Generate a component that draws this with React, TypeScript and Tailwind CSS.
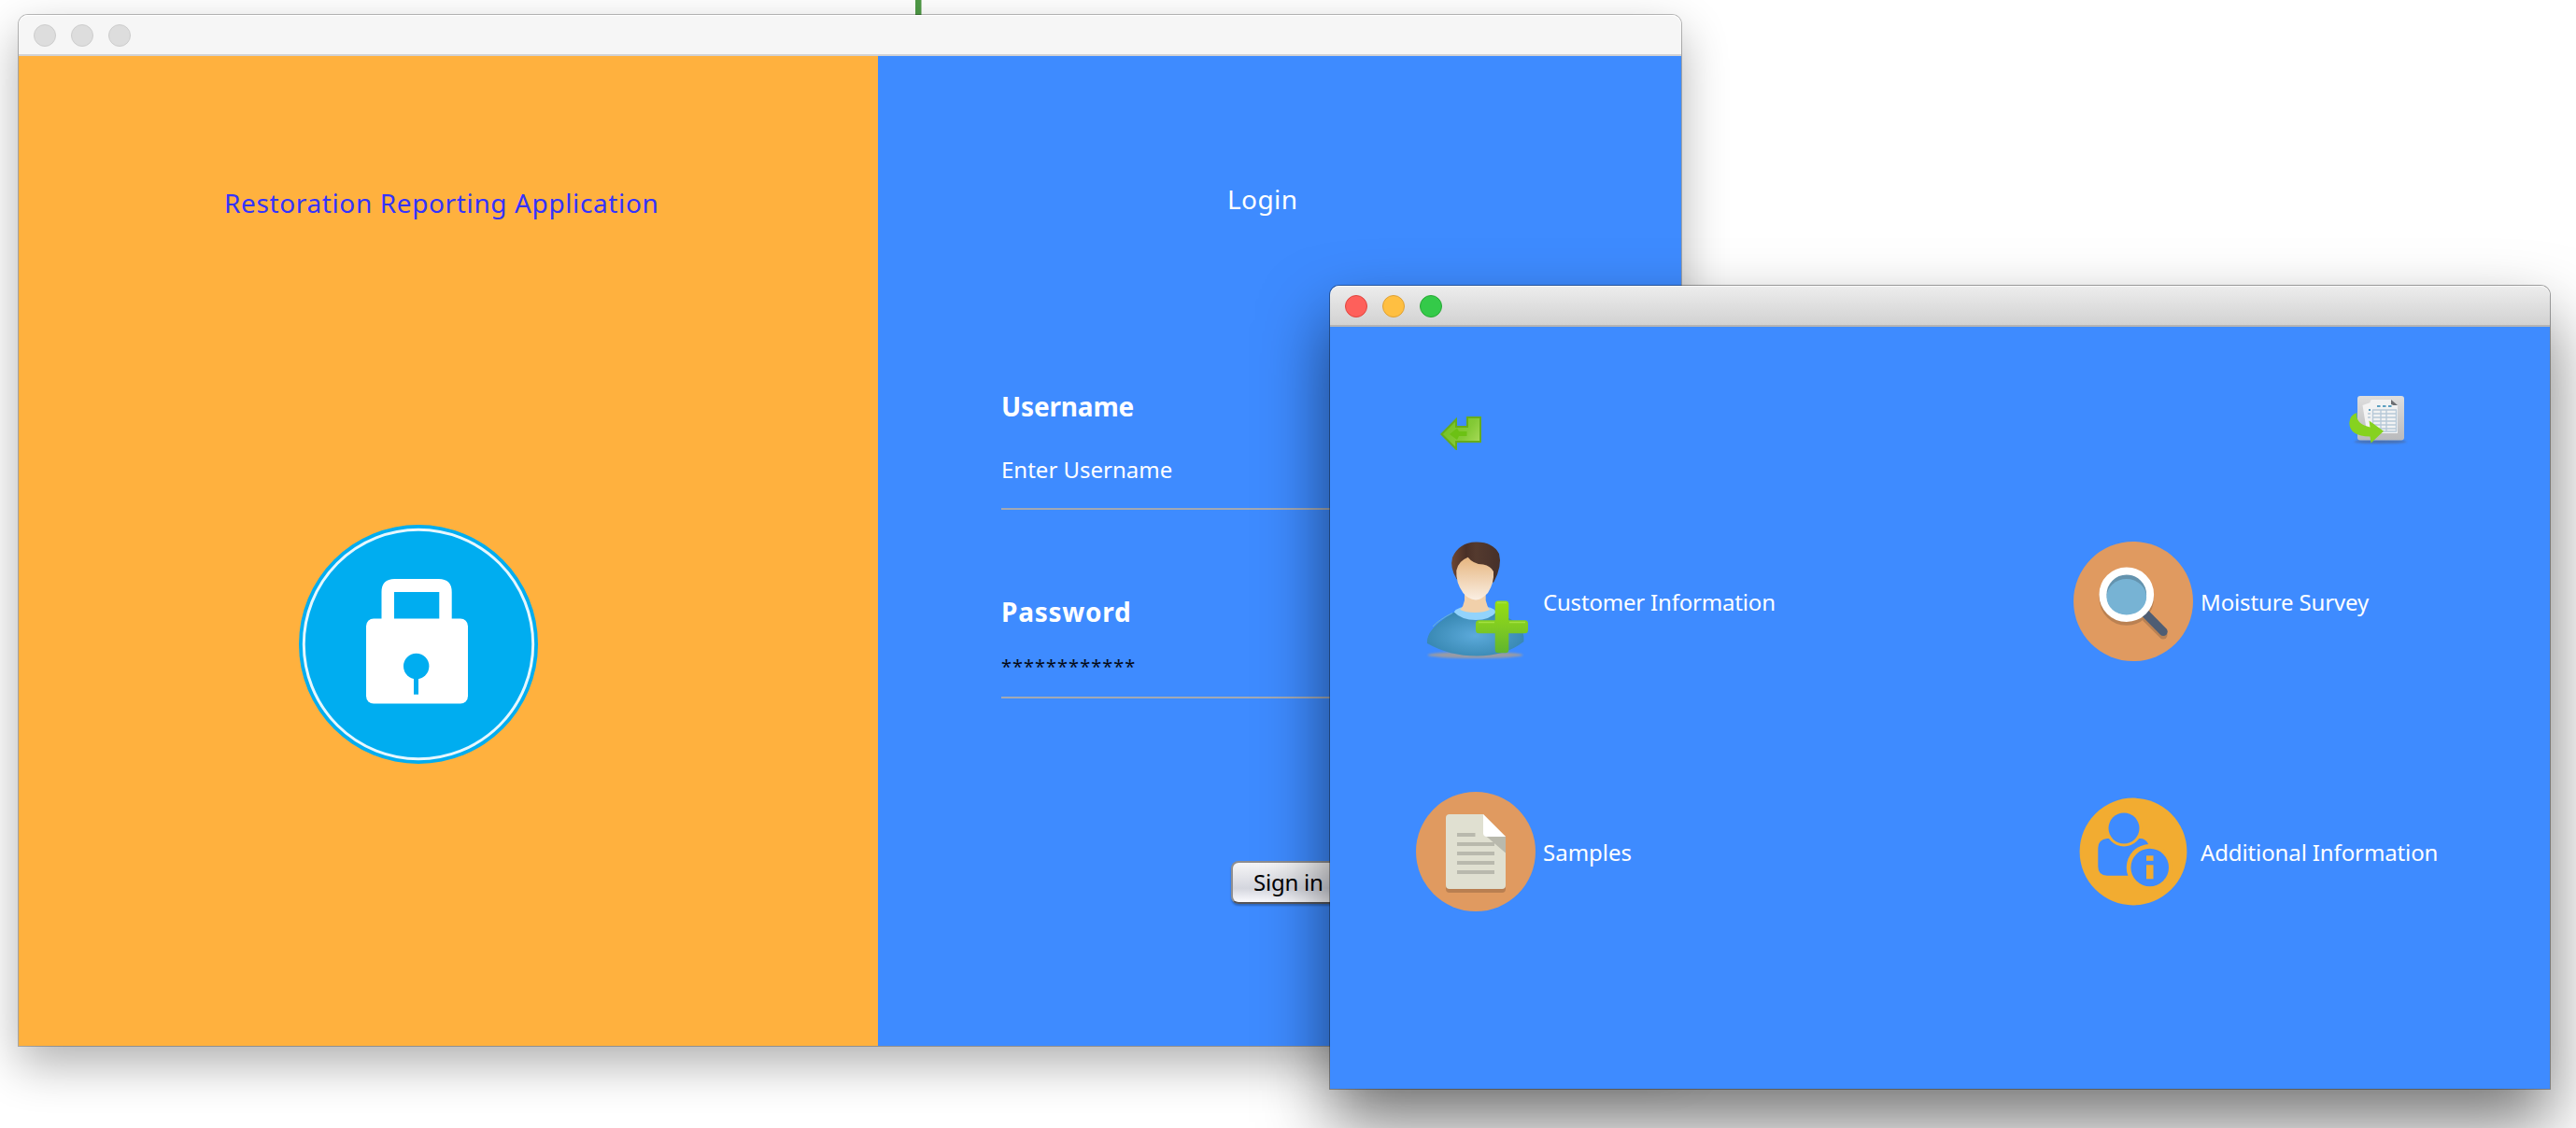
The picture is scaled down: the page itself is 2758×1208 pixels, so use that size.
import React from 'react';
import type { ReactNode } from 'react';

function TitleBar({ active }: { active: boolean }) {
  const lights = active
    ? ['bg-[#fe605b] border-[#e0443e]', 'bg-[#ffbf41] border-[#dea034]', 'bg-[#34ca49] border-[#27a834]']
    : ['bg-[#dddddd] border-[#cdcdcd]', 'bg-[#dddddd] border-[#cdcdcd]', 'bg-[#dddddd] border-[#cdcdcd]'];
  return (
    <header
      className={
        active
          ? 'flex h-11 items-center gap-4 rounded-t-[10px] border-b-2 border-[#b4b4b4] bg-linear-to-b from-[#ededed] to-[#d2d2d2] pl-4 shadow-[inset_0_1px_0_#f8f8f8]'
          : 'flex h-11 items-center gap-4 rounded-t-[10px] border-b-2 border-[#d2d2d4] bg-[#f6f6f6] pl-4 shadow-[inset_0_1px_0_#ffffff]'
      }
    >
      {lights.map((c, i) => (
        <span key={i} className={`mt-0.5 size-6 rounded-full border ${c}`} />
      ))}
    </header>
  );
}

function LockIcon() {
  return (
    <svg className="mt-[325px] ml-[80px] size-64" viewBox="0 0 256 256">
      <circle cx="128" cy="128" r="128" fill="#00adf0" />
      <circle cx="128" cy="128" r="122.7" fill="none" stroke="#fff" strokeOpacity=".9" strokeWidth="3" />
      <path d="M88.5 102V72q0-14 14-14h47.2q14 0 14 14v30h-13.4V72h-48.3v30z" fill="#fff" />
      <rect x="72" y="100.5" width="109" height="91" rx="8" fill="#fff" />
      <circle cx="125.7" cy="151.5" r="13.7" fill="#00adf0" />
      <rect x="123" y="160" width="5" height="21.7" fill="#00adf0" />
    </svg>
  );
}

function BackIcon() {
  return (
    <svg className="mt-[23px] h-9 w-11" viewBox="0 0 44 36">
      <defs>
        <linearGradient id="back" x1="0" y1="0.3" x2="1" y2="0.9">
          <stop offset="0" stopColor="#74c222" />
          <stop offset="0.55" stopColor="#84ca36" />
          <stop offset="1" stopColor="#acdc5c" />
        </linearGradient>
      </defs>
      <path
        d="M1.400 19 17 3.200V11h12V1h14v26H17v7.800z"
        fill="url(#back)"
        stroke="#66ac1c"
        strokeWidth="2"
      />
      <path d="M10 19l8-6.500 2 3.500h8.500v5H20l-2 4z" fill="#6cc114" />
    </svg>
  );
}

function ExportIcon() {
  return (
    <svg className="h-[54px] w-16" viewBox="0 0 64 54">
      <defs>
        <linearGradient id="tile" x1="0" y1="0" x2="0" y2="1">
          <stop offset="0" stopColor="#dedede" />
          <stop offset="1" stopColor="#b9babc" />
        </linearGradient>
        <filter id="soft" x="-10%" y="-60%" width="120%" height="220%">
          <feGaussianBlur stdDeviation="1.2" />
        </filter>
      </defs>
      <ellipse cx="34.5" cy="50" rx="28" ry="2" fill="#4a6fae" filter="url(#soft)" />
      <rect x="10" y="1" width="50" height="47.5" rx="3" fill="url(#tile)" />
      <path d="M15.500 11 24 8l4 30-8 1z" fill="#f3f3f3" />
      <path d="M23.700 7q0-2 2-2H46l7 6.500v29.500H23.700z" fill="#f1f2f3" />
      <path d="M46 5l7 6h-4.500l-2.500-1z" fill="#6b6e72" />
      <g fill="#5b9fc0">
        <rect x="31" y="11" width="3.500" height="2" />
        <rect x="37" y="11" width="3.500" height="2" />
        <rect x="43" y="11" width="3.500" height="2" />
        <rect x="22" y="15" width="2" height="2" />
      </g>
      <path
        d="M26 16h26M26 20h26M26 24h26M26 28h26M26 32h26M26 36h26M26 39h26M26.500 16v23M35 16v23M41 16v23M51.500 16v23M21 20h3M21 24h3"
        stroke="#b7c9d8"
        strokeWidth="1.4"
        fill="none"
      />
      <path
        d="M9.500 19Q7.500 31 23.500 34.500L22.500 27.500 38 38.700 24.500 51.500 23.500 44.500Q1.500 44 1.300 30 2 21 9.500 19z"
        fill="#86d21f"
      />
    </svg>
  );
}

function CustomerIcon() {
  return (
    <svg className="size-32" viewBox="0 0 128 128">
      <defs>
        <linearGradient id="hair" x1="0" y1="0" x2="1" y2="0">
          <stop offset="0" stopColor="#6d4632" />
          <stop offset="0.3" stopColor="#4a3027" />
          <stop offset="0.5" stopColor="#543a2e" />
          <stop offset="1" stopColor="#46302a" />
        </linearGradient>
        <linearGradient id="face" x1="0" y1="0" x2="0" y2="1">
          <stop offset="0" stopColor="#e6b57f" />
          <stop offset="1" stopColor="#faefe3" />
        </linearGradient>
        <radialGradient id="shirt" cx="0.5" cy="0.55" r="0.55">
          <stop offset="0" stopColor="#5caadb" />
          <stop offset="1" stopColor="#3686b0" />
        </radialGradient>
        <linearGradient id="plus" x1="0" y1="0" x2="0" y2="1">
          <stop offset="0" stopColor="#96de12" />
          <stop offset="0.5" stopColor="#80cb22" />
          <stop offset="1" stopColor="#5fb52f" />
        </linearGradient>
        <filter id="ground" x="-10%" y="-80%" width="120%" height="260%">
          <feGaussianBlur stdDeviation="1.3" />
        </filter>
      </defs>
      <ellipse cx="63.5" cy="121.500" rx="51" ry="3.500" fill="#999ba5" filter="url(#ground)" />
      <path
        d="M42 75Q21 87 14.500 98 11.500 104 12 109 36 122.500 65 122.500 96 122.500 115.500 107 116 93 108 87.500 99 81 85 74z"
        fill="url(#shirt)"
      />
      <path d="M18 91Q24 84 39 76.500" stroke="#67b5d4" strokeWidth="1" fill="none" />
      <path d="M40.700 75.500Q43 72 48 70.500H79Q84 72 86 75.500 79 84 64 84 49 84 40.700 75.500z" fill="#92d3fc" />
      <path d="M52 56H74.700V63Q76 69 79 73 73 76 63 76 53 76 47.300 73 51 69 52 63z" fill="#f1d0aa" />
      <path
        d="M43.500 40Q36 28 39 17 46 1 64 .5 82 0 89 13 92.500 26 83.500 43L79 46 62 34 46 42z"
        fill="url(#hair)"
      />
      <path
        d="M55.700 16.700Q61 24 72 24.500 80 26 83 32 84 44 77 55 70 62.500 64 62.500 56 62 50.500 55 42.500 44 43.300 31 45 21 55.700 16.700z"
        fill="url(#face)"
      />
      <path
        d="M88 63.500h8q3.300 0 3.300 3.500v17.200h17.200q3.500 0 3.500 3.500v7q0 3.600-3.500 3.600H99.300v17.400q0 3.600-3.500 3.600h-7.500q-3.600 0-3.600-3.600V98.300H67.500q-3.500 0-3.500-3.600v-7q0-3.500 3.500-3.500h17.200V67q0-3.500 3.300-3.500z"
        fill="url(#plus)"
      />
      <path d="M87 65.500h10M67 86.500h17M100 86.500h17" stroke="#a2e03f" strokeWidth="1.5" />
    </svg>
  );
}

function SurveyIcon() {
  return (
    <svg className="size-32" viewBox="0 0 128 128">
      <circle cx="64" cy="64" r="64" fill="#e09a60" />
      <g opacity=".2" stroke="#231f20" fill="none">
        <path d="M78 82 96 100" strokeWidth="9" strokeLinecap="round" />
        <circle cx="56.8" cy="60.5" r="25.3" strokeWidth="8" />
      </g>
      <path d="M76 76 96.200 96.500" stroke="#4f5d73" strokeWidth="9" strokeLinecap="round" />
      <circle cx="56.8" cy="56.7" r="25.300" fill="#6493ae" stroke="#fff" strokeWidth="8" />
      <path d="M35.500 59.500a21.300 19.500 0 0 1 42.600 0 21.300 19 0 0 1-42.600 0z" fill="#77b3d4" />
    </svg>
  );
}

function SamplesIcon() {
  return (
    <svg className="size-32" viewBox="0 0 128 128">
      <circle cx="64" cy="64" r="64" fill="#e09a60" />
      <path d="M32 100v4q0 4 4 4h56q4 0 4-4v-4z" fill="#b97f51" />
      <path d="M36 24h36l24 24v52q0 4-4 4H36q-4 0-4-4V28q0-4 4-4z" fill="#e0e0d1" />
      <path d="M44 46h19.500M44 56h40M44 66h40M44 76h40M44 86h40" stroke="#b9b9ad" strokeWidth="4" />
      <path d="M74 46.500 96 48v17.500z" fill="#b9b9ad" />
      <path d="M72 24l24 24H76q-4 0-4-4z" fill="#fff" />
    </svg>
  );
}

function InfoIcon() {
  return (
    <svg className="size-32" viewBox="0 0 128 128">
      <circle cx="64" cy="64" r="57.4" fill="#f2ac31" />
      <path
        d="M36 50H71.500Q77 50 79.800 55.500V89.700H36Q26.300 89.500 26.300 80V60Q26.500 51 36 50z"
        fill="#3e8bff"
      />
      <circle cx="54" cy="39" r="19.5" fill="#f2ac31" />
      <circle cx="54" cy="39" r="16.5" fill="#3e8bff" />
      <circle cx="81.7" cy="81" r="25" fill="#f2ac31" />
      <circle cx="81.7" cy="81" r="20.3" fill="#3e8bff" />
      <rect x="78" y="68.3" width="7.5" height="5.5" fill="#f2ac31" />
      <rect x="78" y="78.3" width="7.5" height="15" fill="#f2ac31" />
    </svg>
  );
}

function MenuItem({ icon, label, spacing }: { icon: ReactNode; label: string; spacing: string }) {
  return (
    <button type="button" className="flex h-32 items-center gap-2 text-left text-white">
      {icon}
      <span className={`mt-px text-2xl leading-[33px] whitespace-nowrap ${spacing}`}>{label}</span>
    </button>
  );
}

function LoginWindow() {
  return (
    <section className="absolute top-4 left-5 h-[1104px] w-[1780px] rounded-t-[10px] shadow-[0_0_0_1px_rgba(0,0,0,0.26),0_20px_50px_rgba(0,0,0,0.31)]">
      <TitleBar active={false} />
      <div className="flex h-[1060px]">
        <div className="w-[920px] bg-[#ffb13e] pt-[137px] pl-[220px]">
          <h1 className="text-[28px] leading-10 tracking-[0.625px] whitespace-nowrap text-[#3333ff]">
            Restoration Reporting Application
          </h1>
          <LockIcon />
        </div>
        <div className="flex flex-1 flex-col items-start bg-[#3e8bff] pt-[133px] pl-[132px] text-white">
          <h2 className="ml-[242px] text-[28px] leading-10 tracking-[0.4px]">Login</h2>
          <label className="mt-[182px] text-[28px] leading-10 font-bold tracking-[-0.17px]">Username</label>
          <div className="mt-[31px] w-[588px] border-b-2 border-[#a3a9b3] pb-[25px] text-2xl leading-[33px]">
            Enter Username
          </div>
          <label className="mt-[89px] text-[28px] leading-10 font-bold tracking-[0.75px]">Password</label>
          <div className="mt-[27px] w-[588px] border-b-2 border-[#a3a9b3] pb-5 text-xl leading-6 tracking-[1px] text-[#050a18]">
            ************
          </div>
          <button
            type="button"
            className="mt-[174px] ml-[246px] flex h-[46px] items-start rounded-lg border-2 border-[#8e8e90] border-b-[#55565a] bg-linear-to-b from-[#f6f6f7] via-[#d4d6de] via-65% to-[#fbfbff] px-[22px] pt-1 text-2xl leading-[33px] tracking-[-0.23px] text-black shadow-[0_2px_2px_rgba(0,0,0,0.25)]"
          >
            Sign in
          </button>
        </div>
      </div>
    </section>
  );
}

function MenuWindow() {
  return (
    <section className="absolute top-[306px] left-[1424px] h-[860px] w-[1306px] rounded-t-[10px] shadow-[0_0_0_1px_rgba(0,0,0,0.35),0_36px_72px_rgba(0,0,0,0.54)]">
      <TitleBar active />
      <div className="h-[816px] bg-[#3e8bff] pt-[73px]">
        <nav className="flex items-start justify-between pr-[152px] pl-[118px]">
          <BackIcon />
          <ExportIcon />
        </nav>
        <div className="mt-[98px] grid grid-cols-[704px_auto] gap-y-[140px] pl-[92px]">
          <MenuItem icon={<CustomerIcon />} label="Customer Information" spacing="tracking-[-0.19px]" />
          <MenuItem icon={<SurveyIcon />} label="Moisture Survey" spacing="tracking-[-0.14px]" />
          <MenuItem icon={<SamplesIcon />} label="Samples" spacing="tracking-normal" />
          <MenuItem icon={<InfoIcon />} label="Additional Information" spacing="tracking-[-0.12px]" />
        </div>
      </div>
    </section>
  );
}

export default function App() {
  return (
    <main className="relative h-[1208px] w-[2758px] overflow-hidden bg-white font-['Noto_Sans',sans-serif]">
      <div className="absolute top-0 left-[980px] h-4 w-[7px] border-r border-[#a9cba4] bg-[#4f9a46]" />
      <LoginWindow />
      <MenuWindow />
    </main>
  );
}
